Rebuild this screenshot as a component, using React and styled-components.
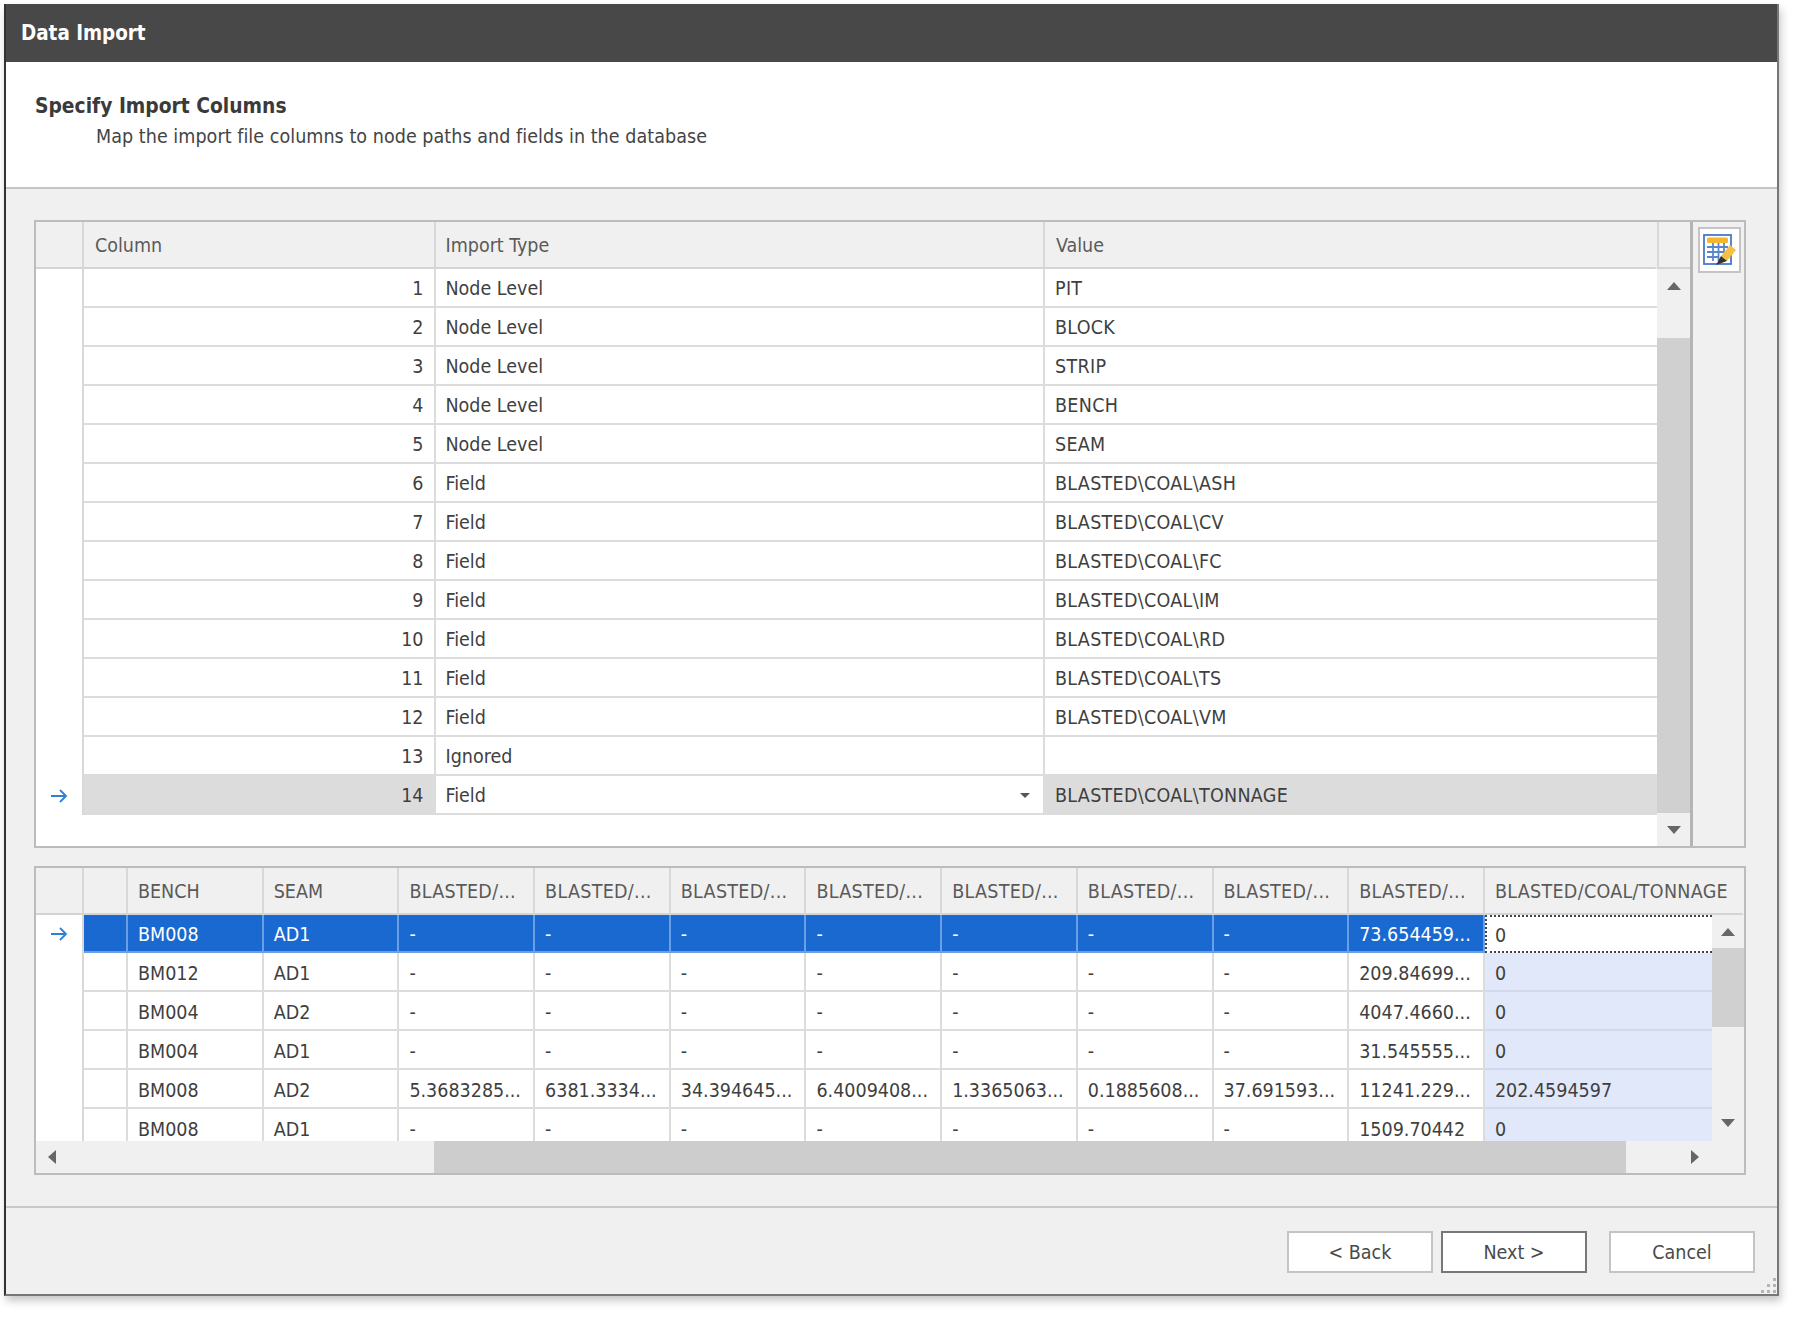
import React from "react"
import styled, { createGlobalStyle } from "styled-components"

const GlobalStyle = createGlobalStyle`
html, body {
    margin: 0;
    padding: 0;
    background: #fff;
}
* { box-sizing: border-box; }
`

const Page = styled.div`
padding: 4px 0 0 4px;
height: 1322px;
font-family: "DejaVu Sans Condensed", "DejaVu Sans", sans-serif;
font-stretch: condensed;
font-size: 19.5px;
color: #3f3f3f;
`

const Window = styled.div`
width: 1775px;
height: 1292px;
display: flex;
flex-direction: column;
background: #f0f0f0;
border-left: 2px solid #333;
border-right: 2px solid #777;
border-bottom: 2px solid #777;
box-shadow: 2px 5px 8px rgba(0,0,0,.22);
position: relative;
`

const TitleBar = styled.div`
height: 58px;
flex: none;
background: #484848;
color: #fff;
font-weight: bold;
font-size: 20.4px;
display: flex;
align-items: center;
padding: 0 0 0 15px;
`

const Header = styled.div`
height: 127px;
flex: none;
background: #fff;
border-bottom: 2px solid #c4c4c4;
padding: 30px 0 0 29px;
`

const Heading = styled.div`
font-weight: bold;
font-size: 20.8px;
line-height: 28px;
color: #3a3a3a;
`

const SubHeading = styled.div`
line-height: 26px;
margin: 4px 0 0 61px;
color: #444;
letter-spacing: .05px;
`

const Content = styled.div`
flex: 1;
display: flex;
flex-direction: column;
gap: 18px;
padding: 31px 31px 0 28px;
`

const Panel = styled.div`
height: ${({ $h }) => $h}px;
flex: none;
display: flex;
border: 2px solid #bcbcbc;
background: #fff;
overflow: hidden;
`

const Column = styled.div`
flex: 1;
min-width: 0;
display: flex;
flex-direction: column;
`

const Row = styled.div`
display: grid;
grid-template-columns: ${({ $cols }) => $cols};
height: ${({ $h }) => $h || 39}px;
flex: none;
`

const HeaderCell = styled.div`
background: #f0f0f0;
color: #5a5a5a;
display: flex;
align-items: center;
padding: 1px 0 0 ${({ $tight }) => $tight ? 10 : 11}px;
border-right: 2px solid ${({ $noline }) => $noline ? "transparent" : "#d8d8d8"};
border-bottom: 2px solid #d4d4d4;
letter-spacing: ${({ $path }) => $path ? ".3px" : "0"};
white-space: nowrap;
overflow: hidden;
`

const Indicator = styled.div`
background: #fff;
display: flex;
align-items: center;
justify-content: center;
border-right: 2px solid #d8d8d8;
`

const Cell = styled.div`
display: flex;
align-items: center;
justify-content: ${({ $right }) => $right ? "flex-end" : "flex-start"};
padding: ${({ $pt }) => $pt || 1}px ${({ $right }) => $right ? "10px" : "0"} 0 ${({ $right }) => $right ? "0" : "10px"};
background: ${({ $bg }) => $bg || "#fff"};
color: ${({ $color }) => $color || "#3f3f3f"};
border-right: ${({ $last, $line }) => $last ? "none" : `2px solid ${$line || "#dcdcdc"}`};
border-bottom: 2px solid ${({ $line }) => $line || "#dcdcdc"};
letter-spacing: ${({ $path }) => $path ? ".3px" : "0"};
white-space: nowrap;
overflow: hidden;
position: relative;
`

const FocusCell = styled(Cell)`
background: #fff;
border: 2px dotted #444;
border-right: none;
padding-left: 8px;
`

const Scroll = styled.div`
width: ${({ $w }) => $w}px;
flex: none;
display: flex;
flex-direction: column;
background: #f0f0f0;
`

const ScrollHead = styled.div`
height: 47px;
flex: none;
border-left: 2px solid #d8d8d8;
border-bottom: 2px solid #d4d4d4;
`

const ScrollButton = styled.div`
height: ${({ $h }) => $h}px;
flex: ${({ $grow }) => $grow ? 1 : "none"};
display: flex;
align-items: ${({ $at }) => $at || "center"};
justify-content: center;
padding: ${({ $pad }) => $pad || 0};
`

const Thumb = styled.div`
height: ${({ $h }) => $h}px;
flex: none;
background: #d0d0d0;
`

const Arrow = styled.div`
width: 0;
height: 0;
border-style: solid;
border-color: transparent;
${({ $dir }) => $dir === "up" && "border-width: 0 7px 8px; border-bottom-color: #666;"}
${({ $dir }) => $dir === "down" && "border-width: 8px 7px 0; border-top-color: #666;"}
${({ $dir }) => $dir === "left" && "border-width: 7px 8px 7px 0; border-right-color: #666;"}
${({ $dir }) => $dir === "right" && "border-width: 7px 0 7px 8px; border-left-color: #666;"}
`

const SmallDrop = styled.div`
position: absolute;
right: 13px;
top: 17px;
width: 0;
height: 0;
border-style: solid;
border-color: transparent;
border-width: 5px 5px 0;
border-top-color: #555;
`

const SidePanel = styled.div`
width: 54px;
flex: none;
background: #f0f0f0;
border-left: 3px solid #b4b4b4;
padding: 5px 0 0 5px;
`

const SideButton = styled.div`
width: 43px;
height: 46px;
background: #fff;
border: 2px solid #c4c4c4;
display: flex;
align-items: center;
justify-content: center;
`

const GridBody = styled.div`
flex: 1;
min-height: 0;
display: flex;
`

const RowsClip = styled.div`
flex: 1;
min-width: 0;
overflow: hidden;
`

const HScroll = styled.div`
height: 32px;
flex: none;
display: flex;
align-items: center;
background: #f0f0f0;
`

const HThumb = styled.div`
width: 1192px;
height: 100%;
margin-left: 386px;
background: #cdcdcd;
`

const HLeft = styled.div`
width: 0;
margin-left: 12px;
`

const HRight = styled.div`
margin-left: 65px;
`

const Footer = styled.div`
flex: 1;
margin-top: 31px;
border-top: 2px solid #c8c8c8;
display: flex;
justify-content: flex-end;
gap: 8px;
padding: 23px 22px 0 0;
`

const Button = styled.div`
width: 146px;
height: 42px;
background: #fff;
border: 2px solid ${({ $primary }) => $primary ? "#777" : "#c4c4c4"};
color: #4a4a4a;
display: flex;
align-items: center;
justify-content: center;
margin-left: ${({ $space }) => $space || 0}px;
`

const Grip = styled.svg`
position: absolute;
right: 0;
bottom: 0;
`

const topCols = "48px 351.5px 609.5px 1fr"
const bottomCols = "48px 44px repeat(10, 135.7px) 1fr"

const topRows = [
    [1, "Node Level", "PIT"],
    [2, "Node Level", "BLOCK"],
    [3, "Node Level", "STRIP"],
    [4, "Node Level", "BENCH"],
    [5, "Node Level", "SEAM"],
    [6, "Field", "BLASTED\\COAL\\ASH"],
    [7, "Field", "BLASTED\\COAL\\CV"],
    [8, "Field", "BLASTED\\COAL\\FC"],
    [9, "Field", "BLASTED\\COAL\\IM"],
    [10, "Field", "BLASTED\\COAL\\RD"],
    [11, "Field", "BLASTED\\COAL\\TS"],
    [12, "Field", "BLASTED\\COAL\\VM"],
    [13, "Ignored", ""],
    [14, "Field", "BLASTED\\COAL\\TONNAGE"],
]

const d = ["-", "-", "-", "-", "-", "-", "-"]
const bottomRows = [
    ["BM008", "AD1", ...d, "73.654459...", "0"],
    ["BM012", "AD1", ...d, "209.84699...", "0"],
    ["BM004", "AD2", ...d, "4047.4660...", "0"],
    ["BM004", "AD1", ...d, "31.545555...", "0"],
    ["BM008", "AD2", "5.3683285...", "6381.3334...", "34.394645...", "6.4009408...", "1.3365063...", "0.1885608...", "37.691593...", "11241.229...", "202.4594597"],
    ["BM008", "AD1", ...d, "1509.70442", "0"],
]

const bottomHead = ["BENCH", "SEAM", ...Array(8).fill("BLASTED/..."), "BLASTED/COAL/TONNAGE"]

function RowArrow() {
    return (
        <svg width="18" height="16" viewBox="0 0 18 16" fill="none" stroke="#2f7ed8" strokeWidth="1.8">
            <path d="M1 8h15M10 2l6 6-6 6" />
        </svg>
    )
}

function TableIcon() {
    return (
        <svg width="33" height="32" viewBox="0 0 33 32" fill="none">
            <rect x="1" y="1" width="27" height="29" fill="#fff" stroke="#4a78c8" strokeWidth="1.8" />
            <rect x="4" y="3.5" width="21" height="5.5" rx="1.5" fill="#f5b52e" />
            <path d="M4 13h21M4 18h20M4 23h12M10 9v18M15.5 9v18M21 9v11" stroke="#5a86d0" strokeWidth="1.8" />
            <path d="M18 22l9-11 6 5-9 11z" fill="#f5c044" />
            <path d="M18 22l-5 9 11-4z" fill="#333" />
        </svg>
    )
}

export default function App() {
    return <>
        <GlobalStyle />
        <Page>
            <Window>
                <TitleBar>Data Import</TitleBar>
                <Header>
                    <Heading>Specify Import Columns</Heading>
                    <SubHeading>Map the import file columns to node paths and fields in the database</SubHeading>
                </Header>
                <Content>
                    <Panel $h={628}>
                        <Column>
                            <Row $cols={topCols} $h={47}>
                                <HeaderCell />
                                <HeaderCell>Column</HeaderCell>
                                <HeaderCell $tight>Import Type</HeaderCell>
                                <HeaderCell $noline>Value</HeaderCell>
                            </Row>
                            {topRows.map(([n, type, value]) => {
                                const active = n === 14
                                return (
                                    <Row $cols={topCols} key={n}>
                                        <Indicator>{active && <RowArrow />}</Indicator>
                                        <Cell $right $bg={active ? "#dcdcdc" : undefined}>{n}</Cell>
                                        <Cell>
                                            {type}
                                            {active && <SmallDrop />}
                                        </Cell>
                                        <Cell $last $path $bg={active ? "#dcdcdc" : undefined}>{value}</Cell>
                                    </Row>
                                )
                            })}
                        </Column>
                        <Scroll $w={33}>
                            <ScrollHead />
                            <ScrollButton $h={69} $at="flex-start" $pad="13px 0 0"><Arrow $dir="up" /></ScrollButton>
                            <Thumb $h={475} />
                            <ScrollButton $grow><Arrow $dir="down" /></ScrollButton>
                        </Scroll>
                        <SidePanel>
                            <SideButton><TableIcon /></SideButton>
                        </SidePanel>
                    </Panel>
                    <Panel $h={309}>
                        <Column>
                            <Row $cols={bottomCols} $h={47}>
                                <HeaderCell />
                                <HeaderCell />
                                {bottomHead.map((h, i) => (
                                    <HeaderCell key={i} $tight $path={i > 1} $noline={i === bottomHead.length - 1}>{h}</HeaderCell>
                                ))}
                            </Row>
                            <GridBody>
                                <RowsClip>
                                    {bottomRows.map((row, r) => {
                                        const selected = r === 0
                                        return (
                                            <Row $cols={bottomCols} $h={selected ? 38 : 39} key={r}>
                                                <Indicator>{selected && <RowArrow />}</Indicator>
                                                <Cell $bg={selected ? "#1a69d0" : undefined} $line={selected ? "#6a9fe4" : undefined} />
                                                {row.map((v, i) => {
                                                    if (i === row.length - 1) {
                                                        return selected
                                                            ? <FocusCell key={i} $pt={2}>{v}</FocusCell>
                                                            : <Cell key={i} $pt={3} $last $bg="#e0e8fa" $line="#d2d9ea">{v}</Cell>
                                                    }
                                                    return (
                                                        <Cell key={i} $pt={3}
                                                            $bg={selected ? "#1a69d0" : undefined}
                                                            $color={selected ? "#fff" : undefined}
                                                            $line={selected ? "#6a9fe4" : undefined}>
                                                            {v}
                                                        </Cell>
                                                    )
                                                })}
                                            </Row>
                                        )
                                    })}
                                </RowsClip>
                                <Scroll $w={32}>
                                    <ScrollButton $h={33}><Arrow $dir="up" /></ScrollButton>
                                    <Thumb $h={79} />
                                    <ScrollButton $grow $at="flex-end" $pad="0 0 14px"><Arrow $dir="down" /></ScrollButton>
                                </Scroll>
                            </GridBody>
                            <HScroll>
                                <HLeft><Arrow $dir="left" /></HLeft>
                                <HThumb />
                                <HRight><Arrow $dir="right" /></HRight>
                            </HScroll>
                        </Column>
                    </Panel>
                </Content>
                <Footer>
                    <Button>&lt; Back</Button>
                    <Button $primary>Next &gt;</Button>
                    <Button $space={14}>Cancel</Button>
                </Footer>
                <Grip width="18" height="18" viewBox="0 0 18 18" fill="#b4b4b4">
                    <rect x="14" y="2" width="3" height="3" />
                    <rect x="8" y="8" width="3" height="3" />
                    <rect x="14" y="8" width="3" height="3" />
                    <rect x="2" y="14" width="3" height="3" />
                    <rect x="8" y="14" width="3" height="3" />
                    <rect x="14" y="14" width="3" height="3" />
                </Grip>
            </Window>
        </Page>
    </>
}
